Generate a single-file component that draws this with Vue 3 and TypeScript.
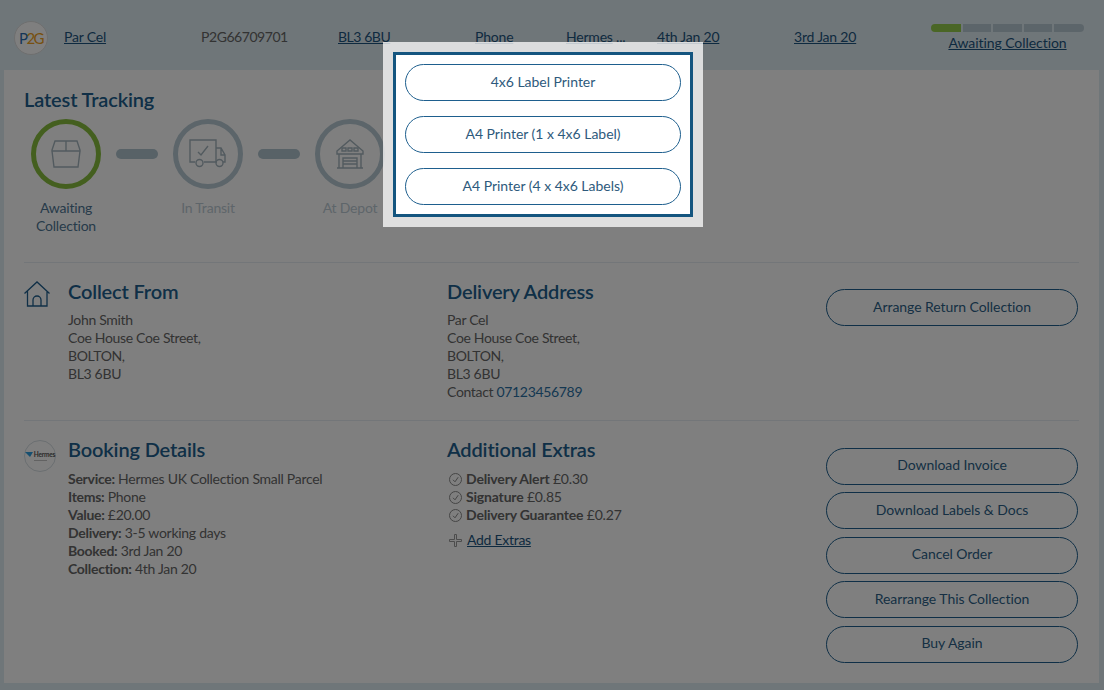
<script setup lang="ts">
interface Column { text: string; link: boolean; suffix?: string; tight?: boolean }
const columns: Column[] = [
  { text: 'Par Cel', link: true },
  { text: 'P2G66709701', link: false, tight: true },
  { text: 'BL3 6BU', link: true, tight: true },
  { text: 'Phone', link: true },
  { text: 'Hermes', link: true, suffix: ' ...' },
  { text: '4th Jan 20', link: true },
  { text: '3rd Jan 20', link: true },
]
const segments = [30, 28, 29, 28, 30]
const steps = [
  { label: 'Awaiting Collection', active: true, icon: 'box' },
  { label: 'In Transit', active: false, icon: 'truck' },
  { label: 'At Depot', active: false, icon: 'depot' },
]
const booking = [
  ['Service:', 'Hermes UK Collection Small Parcel'],
  ['Items:', 'Phone'],
  ['Value:', '£20.00'],
  ['Delivery:', '3-5 working days'],
  ['Booked:', '3rd Jan 20'],
  ['Collection:', '4th Jan 20'],
]
const extras = [
  ['Delivery Alert', '£0.30'],
  ['Signature', '£0.85'],
  ['Delivery Guarantee', '£0.27'],
]
const actions = ['Download Invoice', 'Download Labels & Docs', 'Cancel Order', 'Rearrange This Collection', 'Buy Again']
const printers = ['4x6 Label Printer', 'A4 Printer (1 x 4x6 Label)', 'A4 Printer (4 x 4x6 Labels)']
</script>

<template>
  <div class="page">
    <header class="top">
      <div class="logo"><span class="p">P</span><span class="g">2G</span></div>
      <div class="cols">
        <div v-for="c in columns" :key="c.text" class="col" :class="{ tight: c.tight }">
          <a v-if="c.link">{{ c.text }}</a>
          <span v-else>{{ c.text }}</span>
          <span v-if="c.suffix" class="more">{{ c.suffix }}</span>
        </div>
        <div class="status">
          <div class="bar">
            <i v-for="(w, i) in segments" :key="i" :class="{ on: i === 0 }" :style="{ width: w + 'px' }"></i>
          </div>
          <a>Awaiting Collection</a>
        </div>
      </div>
    </header>

    <main class="card">
      <h2>Latest Tracking</h2>
      <div class="steps">
        <template v-for="(s, i) in steps" :key="s.label">
          <div v-if="i > 0" class="link"></div>
          <div class="step" :class="{ active: s.active }">
            <div class="ring">
              <svg v-if="s.icon === 'box'" width="30" height="30" viewBox="0 0 30 30" fill="none">
                <path d="M4 2h22l3 9v1H1v-1zM15 2v10M1 12l2 16h24l2-16" />
              </svg>
              <svg v-else-if="s.icon === 'truck'" width="38" height="30" viewBox="0 0 38 30" fill="none">
                <path d="M6 23H1V1h26v22H15M27 9h5l4 7v7h-2M27 23h1M32 9v7h4" />
                <circle cx="10.500" cy="24" r="3.500" />
                <circle cx="30.500" cy="24" r="3.500" />
                <path d="M9 13l3 3 7-9" />
              </svg>
              <svg v-else width="28" height="30" viewBox="0 0 28 30" fill="none">
                <path d="M1 12L14 1l13 11v3h-2v14H3V15H1zM3 15h22M7 29V19h14v10M7 22h14M7 25h14M1 29h26" />
                <path d="M6 9h4v3H6zM12 9h4v3h-4zM18 9h4v3h-4z" />
              </svg>
            </div>
            <div class="label">{{ s.label }}</div>
          </div>
        </template>
      </div>

      <section class="row first">
        <div class="ico">
          <svg width="26" height="26" viewBox="0 0 26 26" fill="none">
            <path d="M0.500 12.500L13 1l12.500 11.500M3.500 10v15h19.500V10M9 25v-6a4 4 0 0 1 8 0v6" />
          </svg>
        </div>
        <div>
          <h3>Collect From</h3>
          <p>John Smith<br />Coe House Coe Street,<br />BOLTON,<br />BL3 6BU</p>
        </div>
        <div>
          <h3>Delivery Address</h3>
          <p>Par Cel<br />Coe House Coe Street,<br />BOLTON,<br />BL3 6BU<br />Contact <span class="tel">07123456789</span></p>
        </div>
        <div class="actions">
          <button class="pill">Arrange Return Collection</button>
        </div>
      </section>

      <section class="row">
        <div class="ico">
          <div class="carrier">
            <div class="mark">
              <svg width="8" height="5" viewBox="0 0 8 5"><path d="M0 0h8L5 5z" fill="#2f9fe0" /></svg>
              <span>Hermes</span>
            </div>
            <i class="tag"></i>
          </div>
        </div>
        <div>
          <h3>Booking Details</h3>
          <p class="list">
            <span v-for="b in booking" :key="b[0]" class="line"><b>{{ b[0] }}</b> {{ b[1] }}</span>
          </p>
        </div>
        <div>
          <h3>Additional Extras</h3>
          <p class="list extras">
            <span v-for="e in extras" :key="e[0]" class="extra">
              <svg width="13" height="13" viewBox="0 0 13 13" fill="none">
                <circle cx="6.500" cy="6.500" r="6" />
                <path d="M4 6.800l2 2 3.200-4.600" />
              </svg>
              <span><b>{{ e[0] }}</b> {{ e[1] }}</span>
            </span>
          </p>
          <div class="add">
            <svg width="13" height="13" viewBox="0 0 13 13" fill="none">
              <path d="M5.500 0.500h2v5h5v2h-5v5h-2v-5h-5v-2h5z" />
            </svg>
            <a>Add Extras</a>
          </div>
        </div>
        <div class="actions stack">
          <button v-for="a in actions" :key="a" class="pill">{{ a }}</button>
        </div>
      </section>
    </main>

    <div class="overlay">
      <div class="modal">
        <div class="inner">
          <button v-for="p in printers" :key="p" class="pill">{{ p }}</button>
        </div>
      </div>
    </div>
  </div>
</template>

<style>
html, body { margin: 0; background: #dfecf2; }
</style>

<style scoped>
.page {
  position: relative;
  width: 1104px;
  height: 690px;
  overflow: hidden;
  background: #dfecf2;
  font-family: Lato, "Open Sans", sans-serif;
  font-size: 14px;
  line-height: 18px;
  color: #666;
}
a { color: #1d5580; text-decoration: underline; }
.top { height: 70px; display: flex; align-items: center; padding-left: 14px; box-sizing: border-box; }
.logo {
  width: 34px; height: 34px; margin-top: 6px; border-radius: 50%; background: #fff;
  border: 1px solid #ddd; box-sizing: border-box; display: flex; align-items: center; justify-content: center;
  font-size: 15px; font-weight: 400; letter-spacing: -1.500px;
}
.logo .p { color: #2a6db0; }
.logo .g { color: #f0a020; }
.cols {
  margin-left: 16px; display: grid; align-items: center;
  grid-template-columns: 137px 137px 137px 91px 91px 137px 137px 153px;
  padding-top: 4px;
  letter-spacing: -0.200px;
}
.col { white-space: pre; }
.col.tight { letter-spacing: -0.450px; }
.more { color: #1d5580; }
.status { display: flex; flex-direction: column; align-items: center; margin-top: 2px; letter-spacing: -0.060px; }
.bar { display: flex; justify-content: space-between; width: 153px; height: 8px; border-radius: 4px; overflow: hidden; margin-bottom: 2px; }
.bar i { display: block; height: 8px; background: #b9cad4; }
.bar i.on { background: #95cc4c; }

.card { margin: 0 5px 0 4px; background: #fff; padding: 18px 20px 20px; height: 613px; box-sizing: border-box; }
h2 { margin: -1px 0 1px; font-size: 20px; line-height: 24px; font-weight: 600; color: #205f8e; letter-spacing: -0.140px; }
.steps { display: flex; margin: 8px 0 0 -8px; }
.step { width: 100px; display: flex; flex-direction: column; align-items: center; text-align: center; }
.ring {
  width: 70px; height: 70px; border-radius: 50%; border: 5px solid #b8cad4; box-sizing: border-box;
  display: flex; align-items: center; justify-content: center;
}
.step.active .ring { border-color: #88bf3f; }
.ring svg path, .ring svg circle { stroke: #a5b5be; stroke-width: 1.400; }
.label { margin-top: 10px; color: #bccbd4; letter-spacing: -0.200px; }
.step.active .label { color: #4e7694; }
.link { width: 42px; height: 10px; margin-top: 30px; border-radius: 5px; background: #b0c4cf; }

.row {
  display: grid; grid-template-columns: 44px 379px 379px 252px;
  border-top: 1px solid #e6edf2; padding: 17px 0 18px;
}
.row.first { margin-top: 27px; min-height: 122px; }
.ico { padding-top: 1px; }
.ico svg path { stroke: #205f8e; stroke-width: 1.300; }
h3 { margin: -1px 0 1px; font-size: 20px; line-height: 24px; font-weight: 600; color: #205f8e; letter-spacing: -0.150px; }
p { margin: 8px 0 0; color: #666; letter-spacing: -0.330px; }
.tel { color: #2a70a4; }
.list { display: flex; flex-direction: column; margin-top: 9px; letter-spacing: -0.280px; }
.list.extras { letter-spacing: -0.180px; }
b { font-weight: 700; color: #666; }
.extra { display: flex; align-items: center; gap: 4px; padding-left: 2px; }
.extra svg circle, .extra svg path { stroke: #8a8a8a; }
.add { display: flex; align-items: center; gap: 5px; margin-top: 7px; padding-left: 2px; letter-spacing: -0.280px; }
.add svg path { stroke: #999; }
.carrier {
  width: 32px; height: 32px; margin-top: 1px; border: 1px solid #d5dde2; border-radius: 50%; box-sizing: border-box;
  display: flex; flex-direction: column; align-items: center; justify-content: center; gap: 2px;
}
.mark {
  display: flex; align-items: center; gap: 1px;
  font-size: 6.500px; line-height: 6px; font-weight: 700; color: #555; letter-spacing: -0.200px;
}
.tag { display: block; width: 13px; height: 1px; background: #c4c4c4; }
.carrier svg path { stroke: none; }
.actions { display: flex; flex-direction: column; padding-top: 9px; }
.actions.stack { gap: 7.500px; padding-top: 9.800px; }
.pill {
  display: block; width: 100%; height: 37px; padding: 0 0 2px; box-sizing: border-box;
  background: #fff; border: 1px solid #1e5f8e; border-radius: 19px;
  font: 14px/18px Lato, "Open Sans", sans-serif; color: #2c5f87; letter-spacing: -0.060px;
}
.overlay { position: absolute; inset: 0; background: rgba(0, 0, 0, 0.5); }
.modal {
  position: absolute; left: 383px; top: 42px; width: 320px; height: 185px; box-sizing: border-box;
  border: 10px solid rgba(255, 255, 255, 0.75);
}
.inner {
  height: 100%; box-sizing: border-box; background: #fff; border: 3px solid #14557f;
  padding: 9px; display: flex; flex-direction: column; gap: 15px;
}
.inner .pill { color: #2e5a7c; letter-spacing: -0.020px; }
</style>
